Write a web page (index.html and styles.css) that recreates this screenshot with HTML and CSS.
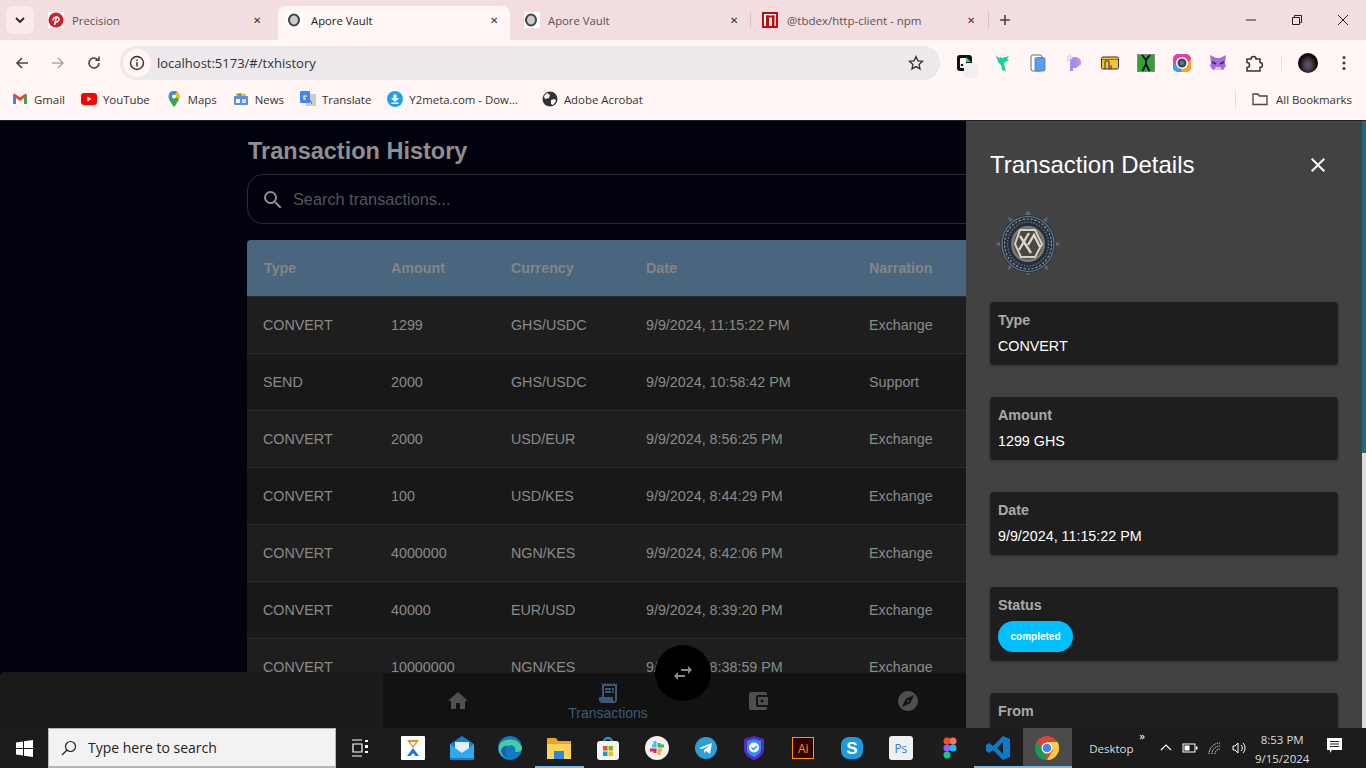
FILE: index.html
```html
<!doctype html>
<html lang="en">
<head>
  <meta charset="UTF-8">
  <title>Apore Vault</title>
  <link rel="stylesheet" href="styles.css">
</head>
<body>
  <header class="chrome">
    <div class="tabstrip">
      <button class="tabs-menu"><svg width="10" height="6" viewBox="0 0 10 6"><path d="M1 1l4 4 4-4" fill="none" stroke="#222" stroke-width="1.8"/></svg></button>
      <div class="tab tab-one">
        <svg class="favicon" viewBox="0 0 16 16"><rect width="16" height="16" fill="#fff"/><circle cx="8" cy="8" r="7.5" fill="#d0202e"/><path d="M6.5 13l1.8-7.5M5.2 8.5C4.5 4.5 11.5 3.8 11 7.5c-.3 2.5-3 3-3.8 1.8" fill="none" stroke="#fff" stroke-width="1.5"/></svg>
        <span class="tab-title">Precision</span>
        <span class="tab-close">✕</span>
      </div>
      <div class="tab tab-active">
        <svg class="favicon" viewBox="0 0 16 16"><rect width="16" height="16" fill="#fff"/><ellipse cx="7" cy="8" rx="5" ry="5.5" fill="#ccc" stroke="#444" stroke-width="2"/></svg>
        <span class="tab-title">Apore Vault</span>
        <span class="tab-close">✕</span>
      </div>
      <div class="tab tab-three">
        <svg class="favicon" viewBox="0 0 16 16"><rect width="16" height="16" fill="#fff"/><ellipse cx="7" cy="8" rx="5" ry="5.5" fill="#ccc" stroke="#444" stroke-width="2"/></svg>
        <span class="tab-title">Apore Vault</span>
        <span class="tab-close">✕</span>
      </div>
      <div class="tab tab-four">
        <svg class="favicon" viewBox="0 0 16 16"><rect width="16" height="16" fill="#c30a0f"/><rect x="2" y="2" width="12" height="12" fill="#fff"/><rect x="4" y="3.5" width="3" height="10.5" fill="#c30a0f"/><rect x="10" y="3.5" width="2.5" height="10.5" fill="#c30a0f"/><rect x="4" y="3.5" width="8.5" height="2" fill="#c30a0f"/></svg>
        <span class="tab-title">@tbdex/http-client - npm</span>
        <span class="tab-close">✕</span>
      </div>
      <span class="new-tab"><svg width="12" height="12" viewBox="0 0 12 12"><path d="M6 1v10M1 6h10" stroke="#444" stroke-width="1.6"/></svg></span>
      <div class="win-btns">
        <svg width="12" height="12" viewBox="0 0 12 12"><path d="M1 6h10" stroke="#222"/></svg>
        <svg width="12" height="12" viewBox="0 0 12 12"><path d="M3.5 3V1.5h7v7H9M1.5 3.5h7v7h-7z" fill="none" stroke="#222"/></svg>
        <svg width="12" height="12" viewBox="0 0 12 12"><path d="M1 1l10 10M11 1L1 11" stroke="#222"/></svg>
      </div>
    </div>

    <div class="toolbar">
      <svg class="nav-icon" viewBox="0 0 16 16"><path d="M14 8H3M8 3L3 8l5 5" fill="none" stroke="#444" stroke-width="1.6"/></svg>
      <svg class="nav-icon" viewBox="0 0 16 16"><path d="M2 8h11M8 3l5 5-5 5" fill="none" stroke="#aaa" stroke-width="1.6"/></svg>
      <svg class="nav-icon" viewBox="0 0 16 16"><path d="M13 8a5 5 0 1 1-1.6-3.7M13 1.5v3.6H9.4" fill="none" stroke="#444" stroke-width="1.6"/></svg>
      <div class="omnibox">
        <span class="site-info"><svg width="16" height="16" viewBox="0 0 16 16"><circle cx="8" cy="8" r="6.5" fill="none" stroke="#333" stroke-width="1.4"/><path d="M8 7v4.5M8 4.4v1.5" stroke="#333" stroke-width="1.5"/></svg></span>
        <span class="url">localhost:5173/#/txhistory</span>
        <svg class="star" width="16" height="16" viewBox="0 0 16 16"><path d="M8 1.6l1.9 4.2 4.6.5-3.4 3.1.9 4.5L8 11.6l-4 2.3.9-4.5L1.5 6.3l4.6-.5z" fill="none" stroke="#333" stroke-width="1.3"/></svg>
      </div>
      <div class="extensions">
        <span class="ext ext-clip"><svg width="16" height="16" viewBox="0 0 16 16"><rect width="15" height="16" rx="3" fill="#111"/><rect x="3" y="3" width="6" height="10" rx="1" fill="#fff"/><path d="M9 2l5 5H9z" fill="#2bd48f"/><circle cx="5" cy="10" r="1.3" fill="#111"/></svg><i class="ext-patch"></i></span>
        <svg class="ext" viewBox="0 0 18 18"><path d="M3 1l3 3 2-1 1 1 4-1 3-1-2 3 2 1-4 2-1 2 1 4 1 3-4-1-1-5-3-3V6L4 5z" fill="#14d39a"/></svg>
        <svg class="ext" viewBox="0 0 18 18"><rect x="2" y="1" width="11" height="16" rx="2" fill="#fff" stroke="#5a6a80"/><rect x="6" y="3.5" width="10" height="13.5" rx="1.5" fill="#5b9cf5" stroke="#4a6a9a" stroke-width=".7"/></svg>
        <svg class="ext" viewBox="0 0 18 18"><path d="M8 3h3a6 6 0 0 1 0 11H8v3H5V6z" fill="#a98bf5"/><path d="M9 3h3a6 6 0 0 1 3 9z" fill="#d08be8"/><path d="M2 7l5-5M2 4l3-3" stroke="#d9c6fb" stroke-width="1.2"/></svg>
        <svg class="ext" viewBox="0 0 18 18"><rect x=".5" y="3" width="17" height="12" rx="1.5" fill="#f5c238" stroke="#333"/><path d="M4 15V7h4v8M10 15v-4" fill="none" stroke="#333"/><path d="M1 5.5h16" stroke="#333" stroke-width=".6"/></svg>
        <svg class="ext" viewBox="0 0 18 18"><rect width="18" height="18" fill="#888"/><rect x="1" y="1" width="16" height="16" fill="#2fa03a"/><path d="M9 4v6M5 1l4 5 4-5M5.5 17L9 10l3.5 7" fill="none" stroke="#111" stroke-width="1.8"/></svg>
        <svg class="ext" viewBox="0 0 18 18"><rect width="18" height="18" rx="5" fill="#e83fa0"/><path d="M18 5v8a5 5 0 0 1-5 5H6z" fill="#f5a623"/><path d="M0 5v8a5 5 0 0 0 5 5h4L0 8z" fill="#2aa7ea"/><circle cx="9" cy="9" r="6" fill="#fff"/><circle cx="9" cy="9" r="4.5" fill="#3a4a5c"/><circle cx="9" cy="9" r="2" fill="#6a7a8c"/></svg>
        <svg class="ext" viewBox="0 0 18 18"><path d="M1 1l6 3h4l6-3-1 8 1 3-3 4-3-1H7l-3 1-3-4 1-3z" fill="#a26be0"/><path d="M3 8l4 2M15 8l-4 2" stroke="#3a2563" stroke-width="1.5"/><path d="M6 13h6l-1 3H7z" fill="#f0c9a0"/></svg>
        <svg class="ext" viewBox="0 0 18 18"><path d="M2 5h4a2.5 2.5 0 1 1 5 0h4v3.500a2.500 2.500 0 1 1 0 5V17H2v-3.500a2.500 2.500 0 1 0 0-5z" fill="none" stroke="#333" stroke-width="1.5"/></svg>
      </div>
      <span class="toolbar-sep"></span>
      <span class="avatar"></span>
      <svg class="kebab" width="4" height="16" viewBox="0 0 4 16"><circle cx="2" cy="2.5" r="1.6" fill="#444"/><circle cx="2" cy="8" r="1.6" fill="#444"/><circle cx="2" cy="13.5" r="1.6" fill="#444"/></svg>
    </div>

    <div class="bookmarks">
      <span class="bm"><svg viewBox="0 0 16 16"><path d="M1 4v9h3V7l4 3 4-3v6h3V4l-1.5-1.5L8 6.5 2.500 2.500z" fill="#ea4335"/><path d="M1 4v9h3V7z" fill="#4285f4"/><path d="M12 7v6h3V4z" fill="#34a853"/></svg>Gmail</span>
      <span class="bm"><svg viewBox="0 0 16 16"><rect y="2" width="16" height="12" rx="3" fill="#f00"/><path d="M6.5 5.5v5l4-2.5z" fill="#fff"/></svg>YouTube</span>
      <span class="bm"><svg viewBox="0 0 16 16"><path d="M8 0a5.5 5.5 0 0 0-5.5 5.5C2.5 9.5 8 16 8 16s5.5-6.5 5.5-10.5A5.500 5.500 0 0 0 8 0z" fill="#34a853"/><path d="M3 3a5.500 5.500 0 0 1 8-2.200L3.500 8z" fill="#4285f4"/><path d="M11 1a5.500 5.500 0 0 1 2 7L8 5z" fill="#fbbc04"/><circle cx="8" cy="5.5" r="2" fill="#fff"/></svg>Maps</span>
      <span class="bm"><svg viewBox="0 0 16 16"><rect x="1" y="5" width="14" height="9" rx="1" fill="#5b8def"/><path d="M3 5l1-3 9 1 0 2z" fill="#fbbc04"/><path d="M3 4l5-2v3z" fill="#34a853"/><rect x="3" y="8" width="4" height="4" fill="#fff"/><rect x="9" y="8" width="4" height="4" fill="#cfe0fc"/></svg>News</span>
      <span class="bm"><svg viewBox="0 0 16 16"><rect x="6" y="3" width="10" height="12" fill="#ccc"/><rect width="10" height="12" rx="1" fill="#4285f4"/><path d="M7 5H4v3h2" fill="none" stroke="#fff" stroke-width="1.2"/><path d="M10 9l2 4" stroke="#666"/></svg>Translate</span>
      <span class="bm"><svg viewBox="0 0 16 16"><circle cx="8" cy="8" r="8" fill="#1fa2ea"/><path d="M6.5 3.5h3V7H12L8 11 4 7h2.5zM4.5 11.5h7V13h-7z" fill="#fff"/></svg>Y2meta.com - Dow...</span>
      <span class="bm bm-adobe"><svg viewBox="0 0 16 16"><circle cx="8" cy="8" r="7.5" fill="#333"/><path d="M5 2l3 2-1 3-4 1-1-3zM9 9l4-1 1 2-3 4-2-1z" fill="#fff"/></svg>Adobe Acrobat</span>
      <span class="bm-sep"></span>
      <span class="bm bm-all"><svg viewBox="0 0 16 16"><path d="M1 13.5V3h5l1.5 2h7.5v8.5z" fill="none" stroke="#444" stroke-width="1.3"/></svg>All Bookmarks</span>
    </div>
  </header>

  <main class="app">
    <section class="history">
      <h1 class="history-title">Transaction History</h1>
      <div class="search">
        <svg width="24" height="24" viewBox="0 0 24 24"><path fill="#8e8e8e" d="M15.5 14h-.79l-.28-.27A6.47 6.47 0 0 0 16 9.5 6.5 6.5 0 1 0 9.5 16c1.61 0 3.09-.59 4.23-1.57l.27.28v.79l5 4.99L20.49 19zm-6 0C7.01 14 5 11.99 5 9.5S7.01 5 9.5 5 14 7.01 14 9.5 11.99 14 9.5 14"/></svg>
        <span class="search-hint">Search transactions...</span>
      </div>
      <div class="table-wrap">
        <table class="tx-table">
          <thead>
            <tr><th class="col-type">Type</th><th class="col-amount">Amount</th><th class="col-cur">Currency</th><th class="col-date">Date</th><th>Narration</th></tr>
          </thead>
          <tbody>
            <tr><td>CONVERT</td><td>1299</td><td>GHS/USDC</td><td>9/9/2024, 11:15:22 PM</td><td>Exchange</td></tr>
            <tr><td>SEND</td><td>2000</td><td>GHS/USDC</td><td>9/9/2024, 10:58:42 PM</td><td>Support</td></tr>
            <tr><td>CONVERT</td><td>2000</td><td>USD/EUR</td><td>9/9/2024, 8:56:25 PM</td><td>Exchange</td></tr>
            <tr><td>CONVERT</td><td>100</td><td>USD/KES</td><td>9/9/2024, 8:44:29 PM</td><td>Exchange</td></tr>
            <tr><td>CONVERT</td><td>4000000</td><td>NGN/KES</td><td>9/9/2024, 8:42:06 PM</td><td>Exchange</td></tr>
            <tr><td>CONVERT</td><td>40000</td><td>EUR/USD</td><td>9/9/2024, 8:39:20 PM</td><td>Exchange</td></tr>
            <tr><td>CONVERT</td><td>10000000</td><td>NGN/KES</td><td>9/9/2024, 8:38:59 PM</td><td>Exchange</td></tr>
          </tbody>
        </table>
      </div>
    </section>

    <nav class="bottom-bar">
      <div class="bottom-nav">
        <span class="nav-item"><svg width="24" height="24" viewBox="0 0 24 24"><path fill="#4f4f4f" d="M10 20v-6h4v6h5v-8h3L12 3 2 12h3v8z"/></svg></span>
        <span class="nav-item nav-item-on"><svg width="24" height="24" viewBox="0 0 24 24"><path fill="#3a5a78" d="M19.5 3.5 18 2l-1.5 1.5L15 2l-1.5 1.5L12 2l-1.5 1.5L9 2 7.5 3.5 6 2v14H3v3c0 1.66 1.34 3 3 3h12c1.66 0 3-1.34 3-3V2zM19 19c0 .55-.45 1-1 1s-1-.45-1-1v-3H8V5h11zM9 7h6v2H9zm7 0h2v2h-2zm-7 3h6v2H9zm7 0h2v2h-2z"/></svg><span>Transactions</span></span>
        <span class="nav-item"><svg width="24" height="24" viewBox="0 0 24 24"><path fill="#4f4f4f" d="M21 18v1c0 1.1-.9 2-2 2H5a2 2 0 0 1-2-2V5a2 2 0 0 1 2-2h14c1.1 0 2 .9 2 2v1h-9a2 2 0 0 0-2 2v8a2 2 0 0 0 2 2zm-9-2h10V8H12zm4-2.5c-.83 0-1.5-.67-1.5-1.5s.67-1.5 1.5-1.5 1.5.67 1.5 1.5-.67 1.5-1.5 1.5"/></svg></span>
        <span class="nav-item"><svg width="24" height="24" viewBox="0 0 24 24"><path fill="#4f4f4f" d="M12 10.9c-.61 0-1.1.49-1.1 1.1s.49 1.1 1.1 1.1c.61 0 1.1-.49 1.1-1.1s-.49-1.1-1.1-1.1M12 2C6.48 2 2 6.48 2 12s4.48 10 10 10 10-4.48 10-10S17.52 2 12 2m2.19 12.19L6 18l3.81-8.19L18 6z"/></svg></span>
      </div>
      <span class="swap-fab"><svg width="24" height="24" viewBox="0 0 24 24"><path fill="#8a8a8a" d="M6.99 11 3 15l3.99 4v-3H14v-2H6.99zM21 9l-3.99-4v3H10v2h7.01v3z"/></svg></span>
    </nav>

    <aside class="drawer">
      <div class="drawer-head">
        <h2>Transaction Details</h2>
        <svg width="24" height="24" viewBox="0 0 24 24"><path fill="#fff" d="M19 6.41 17.59 5 12 10.59 6.41 5 5 6.41 10.59 12 5 17.59 6.41 19 12 13.41 17.59 19 19 17.59 13.41 12z"/></svg>
      </div>
      <svg class="drawer-logo" width="66" height="66" viewBox="0 0 66 66">
        <path d="M33 1l3 5h-6zM13 8l6 3-4 3zM53 8l-2 6-4-3zM0 35l5-2v4zM66 35l-5 2v-4zM13 61l1-6 4 3zM53 61l-5-3 4-3zM33 66l-2-2h4z" fill="#5f6a73"/>
        <ellipse cx="33" cy="35" rx="27.5" ry="29" fill="#242f39"/>
        <ellipse cx="33" cy="35" rx="26" ry="27.5" fill="none" stroke="#66798a" stroke-width="1.2"/>
        <ellipse cx="33" cy="35" rx="23.5" ry="25" fill="none" stroke="#8494a0" stroke-width="1.2" stroke-dasharray="2.5 1.5"/>
        <ellipse cx="33" cy="35" rx="20.5" ry="22" fill="none" stroke="#5f7182" stroke-width="1.5" stroke-dasharray="1.5 1.5"/>
        <ellipse cx="33" cy="35" rx="17" ry="18" fill="#7d7b78"/>
        <ellipse cx="33" cy="35" rx="14.5" ry="15.5" fill="#55534f"/>
        <path d="M25 21h15l7 14-7 13H26l-6-13z" fill="#4a4845" stroke="#d5cfc4" stroke-width="2"/>
        <path d="M24 41l10-17M25 27l11 17M33 36l6-10 6 12" fill="none" stroke="#dcd6cb" stroke-width="2.4"/>
      </svg>

      <div class="detail-card"><span class="detail-label">Type</span><span class="detail-value">CONVERT</span></div>
      <div class="detail-card"><span class="detail-label">Amount</span><span class="detail-value">1299 GHS</span></div>
      <div class="detail-card"><span class="detail-label">Date</span><span class="detail-value">9/9/2024, 11:15:22 PM</span></div>
      <div class="detail-card card-status"><span class="detail-label">Status</span><span class="status-chip">completed</span></div>
      <div class="detail-card"><span class="detail-label">From</span><span class="detail-value">&nbsp;</span></div>
    </aside>

    <div class="scrollbar"><div class="scroll-thumb"></div></div>
  </main>

  <footer class="taskbar">
    <span class="start"><svg width="17" height="17" viewBox="0 0 17 17"><path fill="#fff" d="M0 2.4l7-1V8H0zM8 1.3L17 0v8H8zM0 9h7v6.600l-7-1zM8 9h9v8l-9-1.300z"/></svg></span>
    <div class="task-search">
      <svg width="16" height="16" viewBox="0 0 16 16"><circle cx="9.5" cy="6.5" r="5" fill="none" stroke="#222" stroke-width="1.2"/><path d="M6 10l-5 5" stroke="#222" stroke-width="1.3"/></svg>
      <span>Type here to search</span>
    </div>
    <span class="task-view"><svg width="18" height="18" viewBox="0 0 18 18"><path d="M1 1h10M1 17h10M2 5h9v8H2z" fill="none" stroke="#fff" stroke-width="1.2"/><path d="M14 1h3v2h-3zM14 6h3v3h-3zM14 12h3v2h-3z" fill="#fff"/></svg></span>
    <div class="task-apps">
      <span class="app-icon"><svg viewBox="0 0 24 24"><rect width="24" height="24" rx="1" fill="#fff"/><path d="M6 4h12l-6 8z" fill="#ef8a1f"/><path d="M12 12L6 20h3.5l2.5-3 2.5 3H18z" fill="#1a73e8"/><path d="M9 6h6l-3 4z" fill="#fff"/></svg></span>
      <span class="app-icon"><svg viewBox="0 0 24 24"><path d="M12 0l12 8v16H0V8z" fill="#0f7fd6"/><path d="M0 8l12 9 12-9v14H0z" fill="#31a9ef"/><path d="M5 6h14v6l-7 5-7-5z" fill="#dff2fd"/></svg></span>
      <span class="app-icon"><svg viewBox="0 0 24 24"><circle cx="12" cy="12" r="12" fill="#0c7cc4"/><path d="M1 10C3 2 21 0 24 12c0 4-6 5-7 3 2-4-3-7-7-5-4 2-4 9 1 12-7 0-11-5-10-12z" fill="#4ecb9e"/><path d="M10 10c-3 2-3 8 1 12-5 0-8-4-8-8 1-3 4-5 7-4z" fill="#1d5fa8"/></svg></span>
      <span class="app-icon app-open"><svg viewBox="0 0 24 24"><path d="M0 2h9l2 3h13v18H0z" fill="#e8a71d"/><rect y="8" width="24" height="15" fill="#fbd35c"/><rect x="7" y="15" width="10" height="8" fill="#2b88d8"/></svg></span>
      <span class="app-icon"><svg viewBox="0 0 24 24"><path d="M8 6a4 4 0 0 1 8 0" fill="none" stroke="#29a8e0" stroke-width="2"/><rect x="1" y="5" width="22" height="19" rx="3" fill="#f4f4f4"/><rect x="7" y="10" width="4.5" height="4.5" fill="#f25022"/><rect x="12.5" y="10" width="4.5" height="4.5" fill="#7fba00"/><rect x="7" y="15.5" width="4.5" height="4.5" fill="#00a4ef"/><rect x="12.5" y="15.5" width="4.5" height="4.5" fill="#ffb900"/></svg></span>
      <span class="app-icon"><svg viewBox="0 0 24 24"><circle cx="12" cy="12" r="12" fill="#f4f0ee"/><path d="M10 5v5H7" stroke="#36c5f0" stroke-width="3" fill="none"/><path d="M19 10h-5V7" stroke="#2eb67d" stroke-width="3" fill="none"/><path d="M14 19v-5h3" stroke="#ecb22e" stroke-width="3" fill="none"/><path d="M5 14h5v3" stroke="#e01e5a" stroke-width="3" fill="none"/></svg></span>
      <span class="app-icon"><svg viewBox="0 0 24 24"><circle cx="12" cy="12" r="11" fill="#2c9fd8"/><path d="M5 12l13-5-2 11-4-3-2 2v-3l6-5-8 4z" fill="#fff"/></svg></span>
      <span class="app-icon"><svg viewBox="0 0 24 24"><path d="M2 3l10-3 10 3v10c0 6-5 9-10 11C7 22 2 19 2 13z" fill="#5b28c9"/><path d="M12 3l7 2v8c0 4-3 6-7 8-4-2-7-4-7-8V5z" fill="#2f8fef"/><circle cx="12" cy="11.5" r="5" fill="#fff"/><path d="M9.5 11.5l2 2 3.5-3.500" fill="none" stroke="#2f8fef" stroke-width="1.5"/></svg></span>
      <span class="app-icon"><span class="ai-icon">Ai</span></span>
      <span class="app-icon"><svg viewBox="0 0 24 24"><rect x="1" y="1" width="22" height="22" rx="8" fill="#1a9be0"/><text x="12" y="18" text-anchor="middle" font-family="Liberation Sans" font-size="17" font-weight="700" fill="#fff">S</text></svg></span>
      <span class="app-icon"><span class="ps-icon">Ps</span></span>
      <span class="app-icon"><svg viewBox="0 0 24 24"><rect width="24" height="24" rx="2" fill="#1e1e1e"/><circle cx="9" cy="5" r="3.5" fill="#f24e1e"/><circle cx="15" cy="5" r="3.5" fill="#ff7262"/><circle cx="9" cy="12" r="3.5" fill="#a259ff"/><circle cx="15" cy="12" r="3.5" fill="#1abcfe"/><circle cx="9" cy="19" r="3.5" fill="#0acf83"/></svg></span>
      <span class="app-icon app-open"><svg viewBox="0 0 24 24"><path d="M17 0l7 3v18l-7 3L7 14l-4 3-3-2V9l3-2 4 3z" fill="#0a7ccc"/><path d="M17 6l-6 6 6 6z" fill="#1e1e1e"/></svg></span>
      <span class="app-icon app-active"><svg viewBox="0 0 24 24"><circle cx="12" cy="12" r="12" fill="#db4437"/><path d="M12 24a12 12 0 0 1-10.4-18L8 14z" fill="#0f9d58"/><path d="M12 24l6-10 4.4-8A12 12 0 0 1 12 24z" fill="#ffcd40"/><path d="M12 6h10.4L24 12l-8 2z" fill="#ffcd40"/><circle cx="12" cy="12" r="5.5" fill="#fff"/><circle cx="12" cy="12" r="4.3" fill="#4285f4"/></svg></span>
    </div>
    <span class="task-desktop">Desktop<i>»</i></span>
    <div class="tray">
      <svg width="14" height="14" viewBox="0 0 14 14"><path d="M2 9l5-5 5 5" fill="none" stroke="#fff" stroke-width="1.2"/></svg>
      <svg width="16" height="14" viewBox="0 0 16 14"><rect x="1" y="3" width="12" height="8" fill="none" stroke="#fff"/><rect x="2.5" y="4.5" width="5" height="5" fill="#fff"/><rect x="14" y="5.5" width="1.5" height="3" fill="#fff"/></svg>
      <svg width="16" height="16" viewBox="0 0 16 16"><path d="M2 14A11 11 0 0 1 13 3M5 14a8 8 0 0 1 8-8M8 14a5 5 0 0 1 5-5" fill="none" stroke="#ddd" stroke-dasharray="1.5 .8"/></svg>
      <svg width="16" height="16" viewBox="0 0 16 16"><path d="M1 6h2l3-3v10l-3-3H1z" fill="none" stroke="#fff"/><path d="M9 5a4 4 0 0 1 0 6M11 3a7 7 0 0 1 0 10" fill="none" stroke="#fff"/></svg>
    </div>
    <div class="clock"><span>8:53 PM</span><span>9/15/2024</span></div>
    <span class="notify"><svg width="18" height="18" viewBox="0 0 18 18"><path d="M1 1h15v12H6l-2 3v-3H1z" fill="#fff"/><path d="M4 4.5h9M4 7h9M4 9.5h9" stroke="#222"/></svg></span>
  </footer>
</body>
</html>
```

FILE: styles.css
```css
* {box-sizing: border-box;}
html, body {margin: 0; height: 768px; overflow: hidden;}
body {display: flex; flex-direction: column; width: 1366px; font-family: "Liberation Sans", Arial, sans-serif; background: #000;}
h1, h2 {margin: 0;}

/* browser */
.chrome {height: 121px; background: #fff6f5; font-family: "Open Sans", "Liberation Sans", sans-serif; border-bottom: 1px solid #222;}
.tabstrip {height: 40px; background: #f2dde0; display: flex; align-items: flex-end; padding-left: 6px;}
.tabs-menu {width: 28px; height: 28px; margin: 0 2px 6px 0; border: 0; border-radius: 7px; background: #fbeaec; display: flex; align-items: center; justify-content: center; padding: 0;}
.tab {height: 34px; display: flex; align-items: center; padding-bottom: 6px; font-size: 11.3px; color: #555; flex: none; border-radius: 8px 8px 0 0;}
.favicon {width: 16px; height: 16px; flex: none; margin-right: 8px;}
.tab-title {flex: 1; white-space: nowrap;}
.tab-close {font-size: 10px; color: #333;}
.tab-one {width: 242px; padding-left: 12px; padding-right: 17px;}
.tab-active {width: 232px; padding-left: 9px; padding-right: 12px; background: #fff6f5; color: #222;}
.tab-three {width: 241px; padding-left: 14px;}
.tab-four {width: 238px; padding-left: 11px; font-size: 11.5px;}
.tab-three::after {content: ""; width: 1px; height: 16px; background: #dbbfc4; margin-left: 12px;}
.tab-four::after {content: ""; width: 1px; height: 16px; background: #dbbfc4; margin-left: 13px;}
.tab-four .favicon {margin-right: 9px;}
.new-tab {width: 30px; height: 34px; margin-left: 1px; padding-bottom: 7px; display: flex; align-items: center; justify-content: center;}
.win-btns {margin-left: auto; display: flex; align-self: flex-start; gap: 34px; padding: 14px 17px 0 0;}

.toolbar {height: 45px; display: flex; align-items: center; padding-left: 14px;}
.nav-icon {width: 16px; height: 16px; margin-right: 20px;}
.nav-icon:nth-child(3) {margin-right: 18px;}
.omnibox {width: 820px; height: 34px; border-radius: 17px; background: #ece8ec; display: flex; align-items: center; padding: 0 16px 0 3px;}
.site-info {width: 28px; height: 28px; border-radius: 50%; background: #fff6f5; display: flex; align-items: center; justify-content: center; margin-right: 6px;}
.url {flex: 1; font-size: 13px; color: #333;}
.extensions {display: flex; align-items: center; gap: 18px; margin-left: 17px;}
.ext {width: 18px; height: 18px; flex: none; display: block;}
.ext-clip {position: relative;}
.ext-patch {position: absolute; left: 7px; top: 9px; width: 14px; height: 15px; background: #f4eeee; border-radius: 3px;}
.toolbar-sep {width: 1px; height: 16px; background: #f0d8dc; margin: 0 16px 0 18px;}
.avatar {width: 20px; height: 20px; border-radius: 50%; background: radial-gradient(ellipse at 50% 60%, #3f6078 0, #5a3e4c 25%, #0a0a0a 60%); margin-right: 24px;}
.bookmarks {height: 35px; padding: 0 0 7px 12px; display: flex; align-items: center; font-size: 11.4px; color: #333;}
.bm {display: flex; align-items: center; margin-right: 16px; white-space: nowrap;}
.bm svg {width: 16px; height: 16px; margin-right: 6px; flex: none;}
.bm-adobe {margin-left: 8px;}
.bm-sep {width: 1px; height: 18px; background: #f0d8dc; margin-left: auto; margin-right: 16px;}
.bm-all {margin-right: 14px;}
.bm-all svg {margin-right: 8px;}

/* app */
.app {height: 607px; position: relative; overflow: hidden; background: #02020f;}
.history {padding: 16px 0 0 247px; width: 1200px;}
.history-title {font-size: 23.5px; line-height: 28px; color: #8f8f8f; font-weight: 700; padding-left: 1px;}
.search {height: 50px; margin-top: 9px; border: 1px solid #2b2b2f; border-radius: 16px; display: flex; align-items: center; padding: 1px 0 0 13px; gap: 8px;}
.search-hint {font-size: 16.3px; color: #55555a;}
.table-wrap {margin-top: 16px; border-radius: 4px 4px 0 0; overflow: hidden; background: #1e1e1e;}
.tx-table {width: 100%; border-collapse: separate; border-spacing: 0; font-size: 14.3px; color: #8a8a8a;}
.tx-table th {height: 57px; padding: 0 16px; background: #4a667e; color: #858585; text-align: left; font-weight: 700; border-bottom: 1px solid #2c2c2c;}
.tx-table th:first-child {padding-left: 17px;}
.tx-table td {height: 57px; padding: 0 16px; border-bottom: 1px solid #2c2c2c;}
.tx-table tbody tr:nth-child(even) {background: #181818;}
.tx-table tbody tr:nth-child(odd) {background: #1e1e1e;}
.col-type {width: 128px;}
.col-amount {width: 120px;}
.col-cur {width: 135px;}
.col-date {width: 223px;}

.bottom-bar {position: absolute; left: 0; right: 0; bottom: 0; height: 56px; background: #1a1a1a; border-radius: 4px 4px 0 0;}
.bottom-nav {position: absolute; left: 383px; top: 1px; bottom: 0; width: 600px; background: #121212; display: flex;}
.nav-item {width: 150px; display: flex; flex-direction: column; align-items: center; justify-content: center; color: #3a5a78; font-size: 14px; line-height: 16px;}
.swap-fab {position: absolute; left: 655px; top: -27px; width: 56px; height: 56px; border-radius: 50%; background: #000; display: flex; align-items: center; justify-content: center;}

.drawer {position: absolute; left: 966px; top: 0; bottom: 0; width: 396px; padding: 0 24px; background: #424242; overflow: hidden;}
.drawer-head {height: 88px; display: flex; align-items: center; justify-content: space-between; padding-right: 8px;}
.drawer-head h2 {font-size: 24px; font-weight: 400; color: #fff;}
.drawer-logo {display: block; margin: 0 0 0 5px;}
.detail-card {height: 63px; margin-top: 32px; background: #1e1e1e; border-radius: 4px; padding: 9px 8px; box-shadow: 0 1px 3px rgba(0,0,0,.3); display: flex; flex-direction: column; align-items: flex-start;}
.drawer-logo + .detail-card {margin-top: 27px;}
.detail-label {font-size: 14.3px; line-height: 18px; font-weight: 700; color: #aaa;}
.detail-value {font-size: 14.3px; line-height: 18px; color: #fff; margin-top: 8px;}
.card-status {height: 74px;}
.status-chip {margin-top: 7px; height: 32px; padding: 0 12.5px; border-radius: 16px; background: #00bfff; color: #fff; font-size: 10px; font-weight: 700; display: flex; align-items: center;}

.scrollbar {position: absolute; top: 0; right: 0; bottom: 0; width: 4px; background: #dcdcdc;}
.scroll-thumb {height: 332px; background: #1a6a8a;}

/* taskbar */
.taskbar {height: 40px; background: #1c1c1c; display: flex; align-items: center; color: #ddd; font-family: "Open Sans", "Liberation Sans", sans-serif;}
.start {width: 48px; display: flex; justify-content: center;}
.task-search {width: 288px; height: 40px; background: #f2f2f2; border: 1px solid #b5b5b5; border-bottom-width: 2px; display: flex; align-items: center; padding-left: 12px; gap: 11px; color: #222; font-size: 14px;}
.task-view {width: 50px; margin-left: -1px; display: flex; justify-content: center;}
.task-apps {display: flex; margin-left: 3.5px;}
.app-icon {width: 48.8px; height: 40px; display: flex; align-items: center; justify-content: center; flex: none;}
.app-icon svg {width: 24px; height: 24px;}
.app-open {box-shadow: inset 0 -2px 0 #76b9ed;}
.app-active {background: #4a4a4a; box-shadow: inset 0 -2px 0 #76b9ed;}
.ai-icon {width: 22px; height: 22px; background: #300; border: 1.5px solid #f90; color: #f90; font-size: 12px; display: flex; align-items: center; justify-content: center;}
.ps-icon {width: 24px; height: 24px; background: #eef0f4; border-radius: 3px; color: #2d7fd8; font-size: 12px; display: flex; align-items: center; justify-content: center;}
.task-desktop {width: 60px; margin-left: 17.5px; font-size: 11.5px; position: relative;}
.task-desktop i {position: absolute; left: 50px; top: -13px; font-style: normal; color: #fff;}
.tray {display: flex; align-items: center; gap: 9px; margin-left: 10px;}
.clock {width: 72px; margin-left: -2px; padding-top: 1px; display: flex; flex-direction: column; align-items: center; font-size: 11.5px; line-height: 19px;}
.notify {margin-left: 8px;}
```
